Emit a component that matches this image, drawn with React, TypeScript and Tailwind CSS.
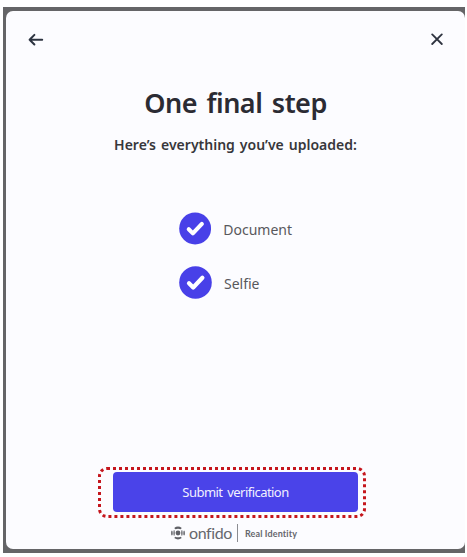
import React from 'react';

const uploads = ['Document', 'Selfie'];

const BackIcon = () => (
  <svg width="16" height="14" viewBox="0 0 16 14" fill="none" stroke="#2c3340" strokeWidth="2" strokeLinecap="round" strokeLinejoin="round">
    <path d="M14.2 6.7H1.6M6.4 1.9 1.6 6.7l4.8 4.8" />
  </svg>
);

const CloseIcon = () => (
  <svg width="12" height="12" viewBox="0 0 12 12" fill="none" stroke="#2f3440" strokeWidth="1.8" strokeLinecap="round">
    <path d="M1.2 1.4l9.6 9.6M10.8 1.4l-9.6 9.6" />
  </svg>
);

const CheckBadge = () => (
  <svg width="33" height="33" viewBox="0 0 33 33" fill="none">
    <circle cx="16.5" cy="16.5" r="16.3" fill="#4840e8" />
    <path d="M10 17.3l4.2 4.2 9.2-9.7" stroke="#fff" strokeWidth="4.2" strokeLinecap="round" strokeLinejoin="round" />
  </svg>
);

const OnfidoMark = () => (
  <svg width="14" height="14" viewBox="0 0 14 14" fill="#5f6066">
    <circle cx="7" cy="7" r="2.4" />
    <path d="M3.2 1.9Q7-.9 10.8 1.9L9.6 3.3Q7 2.2 4.4 3.3z" />
    <path d="M3.2 12.1Q7 14.9 10.8 12.1L9.6 10.7Q7 11.8 4.4 10.7z" />
    <ellipse cx=".9" cy="7" rx=".8" ry="2.6" />
    <ellipse cx="13.1" cy="7" rx=".8" ry="2.6" />
    <ellipse cx="3.1" cy="7" rx=".7" ry="2.9" />
    <ellipse cx="10.9" cy="7" rx=".7" ry="2.9" />
  </svg>
);

export default function App() {
  return (
    <div className="h-[557px] w-[467px] overflow-hidden bg-white pt-[7px] pl-[3px] font-['Noto_Sans',sans-serif]">
      <div className="h-[546px] w-[462px] bg-[#656567] pt-1 pl-[3px]">
        <main className="flex h-[538px] w-[459px] flex-col items-center rounded-[7px] bg-[#fcfcff]">
          {/* Navigation */}
          <div className="flex w-full shrink-0 items-start justify-between pt-[22px] pr-[22px] pl-[22px]">
            <button aria-label="Back">
              <BackIcon />
            </button>
            <button aria-label="Close">
              <CloseIcon />
            </button>
          </div>

          {/* Heading */}
          <h1 className="mt-[38px] text-[27px] leading-[36px] font-semibold tracking-[-0.5px] whitespace-nowrap text-[#2b2b33] [font-variant-ligatures:none] [word-spacing:3px]">
            One final step
          </h1>
          <p className="mt-[14px] text-[14px] leading-[20px] font-semibold whitespace-nowrap text-[#37373b] [word-spacing:1.4px]">
            Here’s everything you’ve uploaded:
          </p>

          {/* Uploaded items */}
          <ul className="mt-[57px] flex w-[113px] flex-col gap-[21px]">
            {uploads.map((name) => (
              <li key={name} className="flex items-center gap-3">
                <CheckBadge />
                <span className="pt-[2px] text-[14px] leading-[20px] text-[#58585c]">{name}</span>
              </li>
            ))}
          </ul>

          {/* Submit */}
          <div className="relative mt-auto">
            <button className="block h-10 w-[245px] rounded bg-[#4a43e9] pt-px text-[13px] tracking-[-0.55px] text-[#f1f0ff] [word-spacing:2px]">
              Submit verification
            </button>
            <svg className="pointer-events-none absolute -top-[5px] -left-[15px]" width="268" height="51" viewBox="0 0 268 51" fill="none">
              <rect x="1.5" y="1.5" width="265" height="48" rx="7.5" stroke="#c5161d" strokeWidth="3" strokeDasharray="3 3" />
            </svg>
          </div>

          {/* Branding */}
          <div className="mt-[10px] mb-[5px] flex h-[22px] items-center pr-[3px] text-[#66676d]">
            <OnfidoMark />
            <span className="ml-1 w-[42px] pb-px font-['Lato',sans-serif] text-[16px] leading-[21px] tracking-[-0.4px] [font-variant-ligatures:none]">onfido</span>
            <span className="ml-[6px] h-[18px] w-px bg-[#8b8c91]" />
            <span className="ml-[7px] pt-px font-['Lato',sans-serif] text-[9px] font-bold tracking-[0.12px] whitespace-nowrap">Real Identity</span>
          </div>
        </main>
      </div>
    </div>
  );
}
